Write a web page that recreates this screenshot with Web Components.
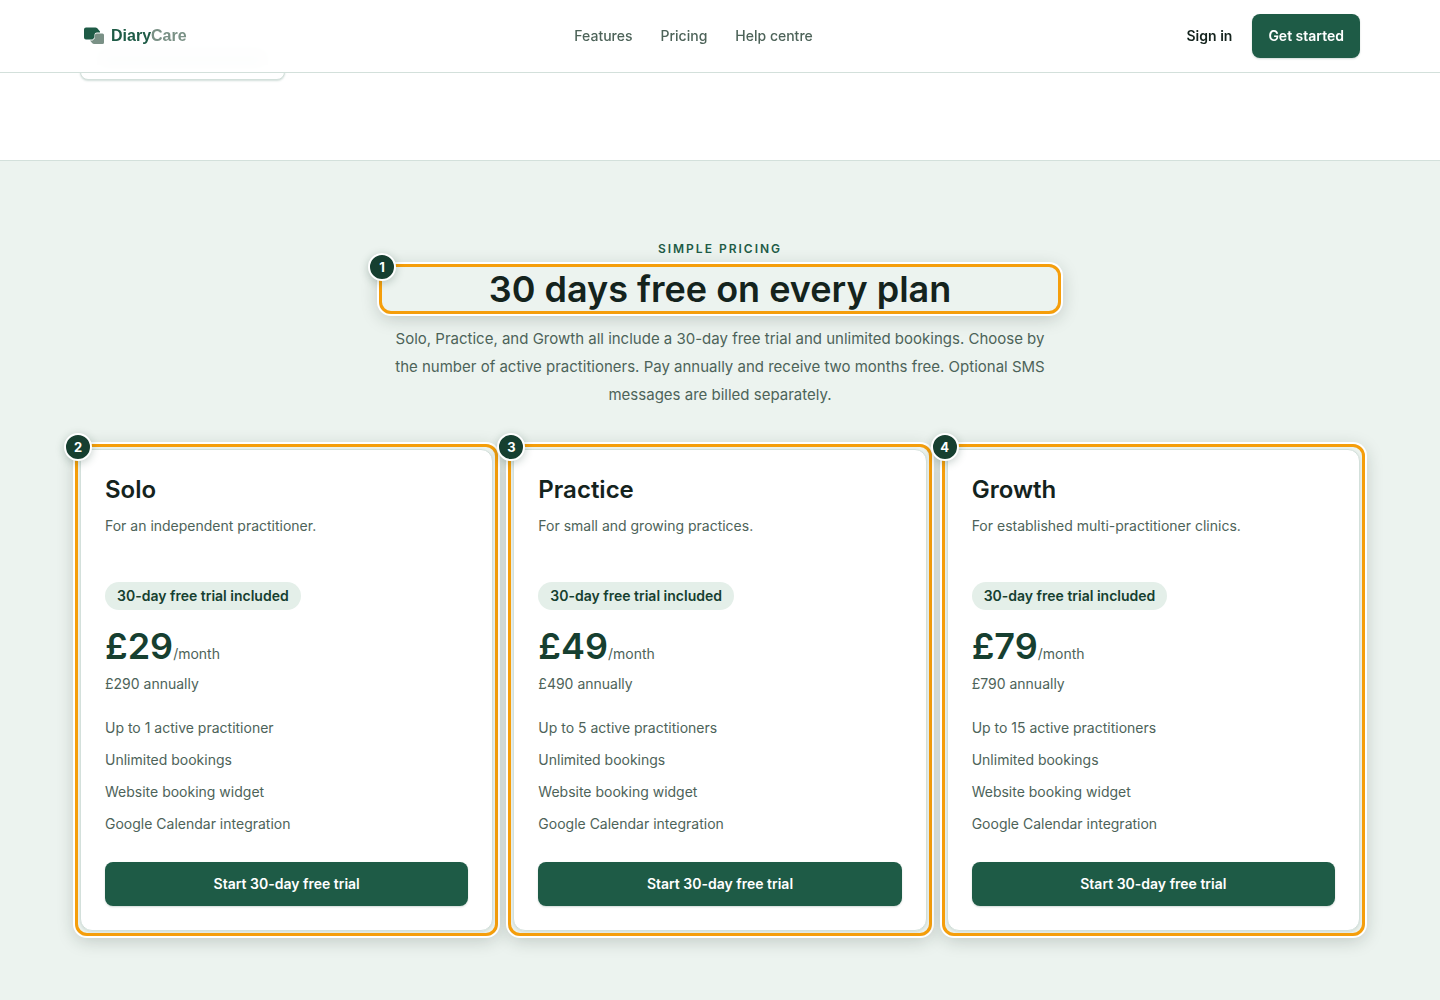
<!DOCTYPE html>
<html lang="en-GB">
<head>
<meta charset="utf-8">
<title>DiaryCare</title>
<style>
:root{--green:#1e5b46;--deep:#163f30;--ink:#14231d;--muted:#4d6359;--line:#d3e0db;--mist:#ecf3ef;--amber:#f59e0b}
body{margin:0;background:#fff;color:var(--ink);font-family:Inter,"Liberation Sans",sans-serif;font-size:14px;line-height:24px}
</style>
</head>
<body>
<site-header></site-header>
<main>
<hero-tail></hero-tail>
<pricing-section>
<span slot="eyebrow">Simple pricing</span>
<call-out slot="title" number="1"><section-title>30 days free on every plan</section-title></call-out>
<span slot="lead">Solo, Practice, and Growth all include a 30-day free trial and unlimited bookings. Choose by the number of active practitioners. Pay annually and receive two months free. Optional SMS messages are billed separately.</span>
<call-out number="2"><plan-card name="Solo" price="29" annual="290" limit="Up to 1 active practitioner">For an independent practitioner.</plan-card></call-out>
<call-out number="3"><plan-card name="Practice" price="49" annual="490" limit="Up to 5 active practitioners">For small and growing practices.</plan-card></call-out>
<call-out number="4"><plan-card name="Growth" price="79" annual="790" limit="Up to 15 active practitioners">For established multi-practitioner clinics.</plan-card></call-out>
</pricing-section>
</main>
<script>
class Base extends HTMLElement{
  connectedCallback(){
    if(this.shadowRoot)return;
    this.attachShadow({mode:"open"}).innerHTML="<style>*{box-sizing:border-box}"+this.styles()+"</style>"+this.markup();
  }
}
customElements.define("brand-logo",class extends Base{
  styles(){return `:host{display:block}
a{display:flex;align-items:center;gap:6px;padding:0 14px 0 4px;color:var(--green);text-decoration:none;font:bold 16px/24px "Liberation Sans",Arial,sans-serif}
svg{display:block}b{color:#7a9186}`}
  markup(){return `<a href="#"><svg width="21" height="18" viewBox="0 0 21 18" aria-hidden="true"><path d="M2 .5h9.500q1 0 1.800.8l2.700 3.200v1h-3q-2.500 0-2.500 2.500v2.500l-2 2H2q-2 0-2-2v-8q0-2 2-2z" fill="#1e5b46"/><path d="M12.500 6.500h6q1.500 0 1.500 1.500v7.500q0 1.500-1.500 1.500h-8.500q-1 0-1.700-.8l-2.300-2.700h2.500l2.500-2.500v-3q0-1.500 1.500-1.500z" fill="#7a9186"/></svg><span>Diary<b>Care</b></span></a>`}
});
customElements.define("action-button",class extends Base{
  styles(){return `:host{display:block}
button{display:block;width:100%;height:44px;padding:0 16px;border:0;border-radius:8px;background:var(--green);color:#fff;font:600 14px/20px Inter,"Liberation Sans",sans-serif;box-shadow:0 1px 2px #163f3033;cursor:pointer;white-space:nowrap}`}
  markup(){return `<button type="button"><slot></slot></button>`}
});
customElements.define("site-header",class extends Base{
  styles(){return `:host{display:block;position:sticky;top:0;z-index:5;background:#fffffff2;backdrop-filter:blur(8px);border-bottom:1px solid var(--line)}
.bar{display:flex;justify-content:space-between;align-items:center;max-width:1280px;height:72px;margin:0 auto}
nav{display:flex;gap:28px}
nav a{color:var(--muted);font-weight:500;text-decoration:none}
.actions{display:flex;align-items:center;gap:20px}
.actions a{color:var(--ink);font-weight:600;text-decoration:none}`}
  markup(){return `<header class="bar"><brand-logo></brand-logo><nav><a href="#">Features</a><a href="#">Pricing</a><a href="#">Help centre</a></nav><div class="actions"><a href="#">Sign in</a><action-button>Get started</action-button></div></header>`}
});
customElements.define("hero-tail",class extends Base{
  styles(){return `:host{display:block;max-width:1280px;margin:-37px auto 0;padding-bottom:80px}
div{width:205px;height:44px;padding:14px 16px;background:#fff;border:1px solid var(--line);border-radius:8px;box-shadow:0 1px 2px #1e5b4633}
i{display:block;height:14px;background:#c4cdc8}`}
  markup(){return `<div><i></i></div>`}
});
customElements.define("section-title",class extends Base{
  styles(){return `:host{display:block}h2{margin:0;font-size:36px;line-height:40px;font-weight:600;text-align:center;white-space:nowrap}`}
  markup(){return `<h2><slot></slot></h2>`}
});
customElements.define("call-out",class extends Base{
  styles(){return `:host{display:block;position:relative}
.ring{position:absolute;inset:-5px;border:3px solid var(--amber);border-radius:12px;box-shadow:0 0 0 2px #fff,0 4px 18px #14231d38;pointer-events:none}
.badge{position:absolute;top:-16px;left:-16px;width:28px;height:28px;border:2px solid #fff;border-radius:50%;background:var(--deep);color:#fff;font-size:13px;font-weight:700;line-height:24px;text-align:center;box-shadow:0 2px 8px #163f3040}`}
  markup(){return `<slot></slot><div class="ring"></div><div class="badge">${this.getAttribute("number")}</div>`}
});
customElements.define("plan-card",class extends Base{
  styles(){return `:host{display:block}
article{display:flex;flex-direction:column;align-items:flex-start;padding:24px;background:#fff;border:1px solid var(--line);border-radius:12px;box-shadow:0 1px 3px #163f3020}
h3{margin:0 0 8px;font-size:24px;line-height:32px;font-weight:600}
p{margin:0;color:var(--muted)}
.about{min-height:48px;margin-bottom:20px}
.pill{padding:0 12px;border-radius:14px;background:#e4efe9;color:var(--deep);font-weight:600;line-height:28px}
.price{margin:16px 0 6px;line-height:24px}
.price strong{color:var(--deep);font-size:36px;line-height:40px;font-weight:600}
ul{display:grid;gap:8px;margin:20px 0 26px;padding:0;list-style:none;color:var(--muted)}
action-button{align-self:stretch}`}
  markup(){const a=n=>this.getAttribute(n);return `<article><h3>${a("name")}</h3><p class="about"><slot></slot></p><span class="pill">30-day free trial included</span><p class="price"><strong>£${a("price")}</strong>/month</p><p>£${a("annual")} annually</p><ul><li>${a("limit")}</li><li>Unlimited bookings</li><li>Website booking widget</li><li>Google Calendar integration</li></ul><action-button>Start 30-day free trial</action-button></article>`}
});
customElements.define("pricing-section",class extends Base{
  styles(){return `:host{display:block;border-top:1px solid var(--line);background:var(--mist)}
section{max-width:1280px;margin:0 auto;padding:80px 0}
.intro{max-width:672px;margin:0 auto;text-align:center}
.eyebrow{margin:0 0 12px;color:var(--green);font-size:12px;line-height:16px;font-weight:600;letter-spacing:2px;text-transform:uppercase}
.lead{margin:16px 0 40px;color:var(--muted);font-size:15px;line-height:28px}
.plans{display:grid;grid-template-columns:repeat(3,1fr);gap:20px}`}
  markup(){return `<section><div class="intro"><p class="eyebrow"><slot name="eyebrow"></slot></p><slot name="title"></slot><p class="lead"><slot name="lead"></slot></p></div><div class="plans"><slot></slot></div></section>`}
});
</script>
</body>
</html>
